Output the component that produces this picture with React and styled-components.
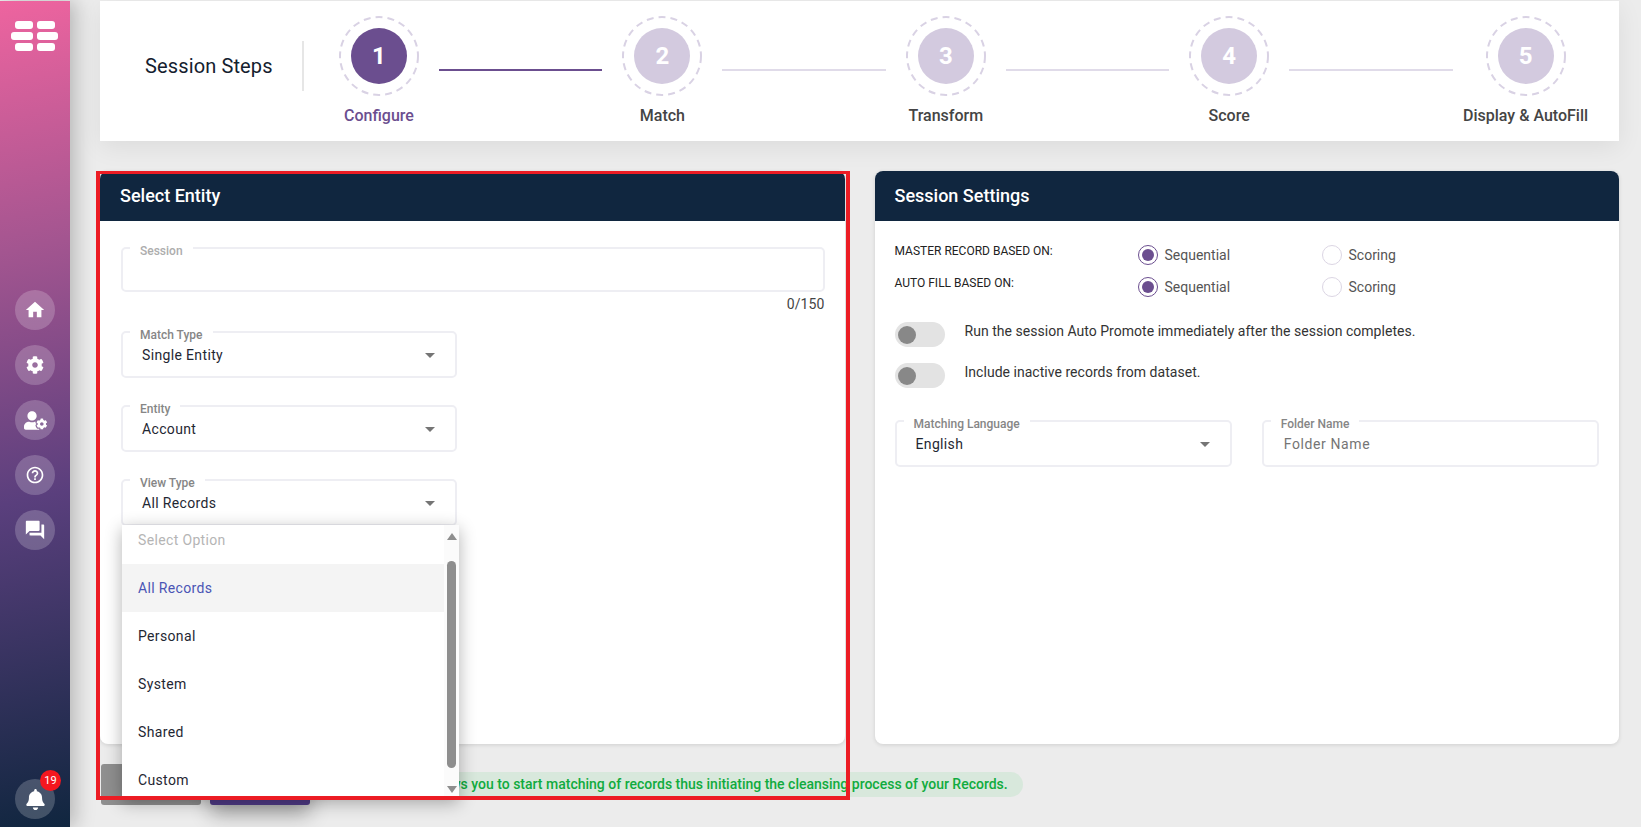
import React from 'react';
import styled, { createGlobalStyle } from 'styled-components';
import { MdHome, MdHelpOutline, MdForum } from 'react-icons/md';
import { FaCog, FaUserCog, FaBell } from 'react-icons/fa';

const Global = createGlobalStyle`
  html, body { margin: 0; padding: 0; background: #ececec; }
  * { box-sizing: border-box; }
  body { font-family: Roboto, "Liberation Sans", sans-serif; }
`;

const Page = styled.div`
  display: flex;
  width: 1641px;
  height: 827px;
  overflow: hidden;
  position: relative;
  background: #ececec;
`;

const Sidebar = styled.aside`
  width: 70px;
  flex: none;
  margin-top: 1px;
  display: flex;
  flex-direction: column;
  align-items: center;
  padding: 20px 0 8px;
  background: linear-gradient(168deg, #ee649f 0%, #a35590 30%, #5a3f7d 60%, #10263f 100%);
  box-shadow: 6px 0 18px rgba(0, 0, 0, 0.22);
  position: relative;
  z-index: 2;
`;

const Logo = styled.svg`
  width: 48px;
  height: 31px;
  flex: none;
`;

const Nav = styled.nav`
  display: flex;
  flex-direction: column;
  gap: 15px;
  margin-top: 238px;
`;

const NavButton = styled.div`
  width: 40px;
  height: 40px;
  border-radius: 50%;
  background: rgba(255, 255, 255, 0.2);
  color: #fff;
  display: flex;
  align-items: center;
  justify-content: center;
  font-size: ${p => p.$size || 20}px;
  position: relative;
`;

const BellWrap = styled.div`
  margin-top: auto;
`;

const Badge = styled.span`
  position: absolute;
  top: -9px;
  right: -6px;
  width: 21px;
  height: 21px;
  border-radius: 50%;
  background: #f4171f;
  color: #fff;
  font-size: 11px;
  display: flex;
  align-items: center;
  justify-content: center;
`;

const Main = styled.main`
  flex: 1;
  min-width: 0;
  padding: 1px 22px 0 30px;
  display: flex;
  flex-direction: column;
`;

const Stepper = styled.section`
  height: 140px;
  background: #fff;
  display: flex;
  align-items: flex-start;
  padding: 15px 0 0 45px;
  box-shadow: 0 6px 24px rgba(0, 0, 0, 0.07);
`;

const StepsTitle = styled.h2`
  margin: 35px 0 0;
  width: 127px;
  font-size: 20px;
  line-height: 30px;
  font-weight: 400;
  letter-spacing: 0.13px;
  color: #14202e;
  white-space: nowrap;
`;

const StepsDivider = styled.div`
  width: 2px;
  height: 50px;
  margin: 25px 35px 0 30px;
  background: #e6e6e6;
`;

const Step = styled.div`
  width: 80px;
  display: flex;
  flex-direction: column;
  align-items: center;
  flex: none;
`;

const Ring = styled.div`
  width: 80px;
  height: 80px;
  position: relative;
  display: flex;
  align-items: center;
  justify-content: center;
`;

const RingDash = styled.svg`
  position: absolute;
  inset: 0;
`;

const StepNumber = styled.div`
  width: 56px;
  height: 56px;
  border-radius: 50%;
  background: ${p => (p.$active ? '#6b4e8f' : '#d3cadf')};
  color: #fff;
  font-size: 24px;
  font-weight: 700;
  display: flex;
  align-items: center;
  justify-content: center;
`;

const StepLabel = styled.div`
  margin-top: 10px;
  font-size: 16px;
  line-height: 20px;
  font-weight: 500;
  white-space: nowrap;
  color: ${p => (p.$active ? '#6b4e8f' : '#444')};
`;

const Connector = styled.div`
  flex: none;
  width: 163.4px;
  height: 2px;
  margin: 53px ${p => p.$right || 20}px 0 20px;
  background: ${p => (p.$active ? '#6b4e8f' : '#e0dbe9')};
`;

const Panels = styled.div`
  display: flex;
  gap: 30px;
  margin-top: 30px;
  height: 573px;
`;

const Panel = styled.section`
  flex: 1;
  background: #fff;
  border-radius: 8px;
  box-shadow: 0 1px 4px rgba(0, 0, 0, 0.12);
  display: flex;
  flex-direction: column;
`;

const PanelHeader = styled.h3`
  margin: 0;
  height: 50px;
  flex: none;
  background: #10263f;
  border-radius: 8px 8px 0 0;
  color: #fff;
  font-size: 18px;
  font-weight: 500;
  line-height: 50px;
  padding-left: 20px;
`;

const LeftBody = styled.div`
  padding: 17px 20px 0 21px;
`;

const RightBody = styled.div`
  padding: 21px 20px 0 20px;
`;

const Field = styled.fieldset`
  margin: 0;
  width: 100%;
  height: ${p => p.$height || 56}px;
  min-width: 0;
  padding: 0 20px 8px 19px;
  border: 2px solid #eeeef3;
  border-radius: 5px;
  display: flex;
  align-items: center;
  justify-content: space-between;
  background: #fff;
`;

const Legend = styled.legend`
  margin-left: -12px;
  padding: 6px 10px 0;
  font-size: 12px;
  line-height: 14px;
  font-weight: 500;
  color: ${p => (p.$muted ? '#adadad' : '#868686')};
`;

const FieldValue = styled.span`
  font-size: 14px;
  letter-spacing: ${p => (p.$placeholder ? '0.6px' : '0.35px')};
  margin-left: ${p => (p.$placeholder ? '1px' : '0')};
  color: ${p => (p.$placeholder ? '#757575' : '#1f2733')};
`;

const Caret = styled.span`
  width: 0;
  height: 0;
  border-left: 5px solid transparent;
  border-right: 5px solid transparent;
  border-top: 5px solid #757575;
`;

const Counter = styled.div`
  text-align: right;
  font-size: 14px;
  line-height: 16px;
  margin: 4px 0 10px;
  color: #444;
  letter-spacing: 0.1px;
`;

const Stack = styled.div`
  display: flex;
  flex-direction: column;
  gap: 18px;
  width: 336px;
`;

const SelectWrap = styled.div`
  position: relative;
  width: 100%;
`;

const Dropdown = styled.div`
  position: absolute;
  left: 1px;
  top: 55px;
  width: 337px;
  height: 274px;
  background: #fff;
  box-shadow: 0 4px 16px rgba(0, 0, 0, 0.3);
  display: flex;
  overflow: hidden;
  z-index: 3;
`;

const OptionList = styled.div`
  flex: 1;
  margin-top: -9px;
`;

const Option = styled.div`
  height: 48px;
  display: flex;
  align-items: center;
  padding-left: 16px;
  font-size: 14px;
  letter-spacing: 0.35px;
  color: ${p => (p.$placeholder ? '#b5b5b5' : p.$selected ? '#4a55b5' : '#1f2733')};
  background: ${p => (p.$selected ? '#f4f4f4' : 'transparent')};
`;

const ScrollTrack = styled.div`
  width: 15px;
  flex: none;
  background: #fbfbfb;
  display: flex;
  flex-direction: column;
  align-items: center;
  padding-top: 8px;
`;

const ScrollArrow = styled.span`
  width: 0;
  height: 0;
  border-left: 5px solid transparent;
  border-right: 5px solid transparent;
  ${p => (p.$down ? 'border-top: 7px solid #8e8e8e; margin-top: 18px;' : 'border-bottom: 7px solid #8e8e8e;')}
`;

const ScrollThumb = styled.div`
  width: 9px;
  height: 207px;
  margin-top: 21px;
  border-radius: 5px;
  background: #8e8e8e;
`;

const Footer = styled.div`
  display: flex;
  align-items: flex-start;
  gap: 9px;
  margin: 20px 0 0 1px;
`;

const ActionButton = styled.div`
  width: 100px;
  height: 41px;
  border-radius: 3px;
  background: ${p => (p.$primary ? '#4f3a85' : '#8f8f8f')};
  box-shadow: ${p => (p.$primary ? '0 10px 20px rgba(0,0,0,.3)' : 'none')};
`;

const Hint = styled.div`
  height: 25px;
  margin: 8px 0 0 29px;
  padding: 0 15px;
  border-radius: 13px;
  background: #d8e8dc;
  color: #10ab3e;
  font-size: 14px;
  font-weight: 500;
  line-height: 25px;
  white-space: nowrap;
`;

const Annotation = styled.div`
  position: absolute;
  left: 96px;
  top: 171px;
  width: 754px;
  height: 629px;
  border: 4px solid #ec1c24;
  border-top-width: 3px;
  z-index: 4;
  pointer-events: none;
`;

const SettingRow = styled.div`
  display: grid;
  grid-template-columns: 243px 184px 1fr;
  height: 32px;
`;

const SettingLabel = styled.span`
  font-size: 12px;
  line-height: 18px;
  color: #222;
  white-space: nowrap;
`;

const RadioOption = styled.span`
  display: flex;
  align-items: center;
  gap: 7px;
  height: 20px;
  margin-top: 3px;
  font-size: 14px;
  color: #555;
`;

const Radio = styled.span`
  width: 20px;
  height: 20px;
  border-radius: 50%;
  border: 1px solid ${p => (p.$on ? '#6b4e8f' : '#dcd6e4')};
  display: flex;
  align-items: center;
  justify-content: center;
  &::after {
    content: '';
    width: 12px;
    height: 12px;
    border-radius: 50%;
    background: ${p => (p.$on ? '#6b4e8f' : 'transparent')};
  }
`;

const ToggleRow = styled.div`
  display: flex;
  align-items: flex-start;
  gap: 20px;
  height: 25px;
`;

const ToggleList = styled.div`
  display: flex;
  flex-direction: column;
  gap: 16px;
  margin-top: 16px;
`;

const Toggle = styled.span`
  width: 50px;
  height: 25px;
  border-radius: 13px;
  background: #e3e3e3;
  display: flex;
  align-items: center;
  padding-left: 3px;
  flex: none;
  &::after {
    content: '';
    width: 18px;
    height: 18px;
    border-radius: 50%;
    background: #888;
  }
`;

const ToggleText = styled.span`
  margin-top: 1px;
  font-size: 14px;
  line-height: 16px;
  letter-spacing: 0.03px;
  color: #333;
  white-space: nowrap;
`;

const FieldRow = styled.div`
  display: grid;
  grid-template-columns: 1fr 1fr;
  gap: 30px;
  margin-top: 23px;
`;

const steps = [
  { n: 1, label: 'Configure', active: true },
  { n: 2, label: 'Match' },
  { n: 3, label: 'Transform' },
  { n: 4, label: 'Score' },
  { n: 5, label: 'Display & AutoFill' },
];

const options = ['Personal', 'System', 'Shared', 'Custom'];

function StepItem({ n, label, active }) {
  return (
    <Step>
      <Ring>
        <RingDash width="80" height="80" viewBox="0 0 80 80">
          <circle cx="40" cy="40" r="39" fill="none" stroke="#d9d2e4" strokeWidth="2" strokeDasharray="7 5" />
        </RingDash>
        <StepNumber $active={active}>{n}</StepNumber>
      </Ring>
      <StepLabel $active={active}>{label}</StepLabel>
    </Step>
  );
}

function SelectField({ label, value, children }) {
  return (
    <SelectWrap>
      <Field>
        <Legend>{label}</Legend>
        <FieldValue>{value}</FieldValue>
        <Caret />
      </Field>
      {children}
    </SelectWrap>
  );
}

function RadioRow({ label }) {
  return (
    <SettingRow>
      <SettingLabel>{label}</SettingLabel>
      <RadioOption><Radio $on />Sequential</RadioOption>
      <RadioOption><Radio />Scoring</RadioOption>
    </SettingRow>
  );
}

export default function App() {
  return (
    <Page>
      <Global />
      <Sidebar>
        <Logo viewBox="0 0 48 31" fill="#fff">
          <rect x="4" y="0" width="18" height="8" rx="3" />
          <rect x="26" y="0" width="18" height="8" rx="3" />
          <rect x="0" y="11" width="22" height="8" rx="3" />
          <rect x="26" y="11" width="21" height="8" rx="3" />
          <rect x="4" y="22" width="18" height="8" rx="3" />
          <rect x="26" y="22" width="18" height="8" rx="3" />
        </Logo>
        <Nav>
          <NavButton $size={22}><MdHome /></NavButton>
          <NavButton $size={18}><FaCog /></NavButton>
          <NavButton $size={23}><FaUserCog /></NavButton>
          <NavButton $size={20}><MdHelpOutline /></NavButton>
          <NavButton $size={22}><MdForum /></NavButton>
        </Nav>
        <BellWrap>
          <NavButton $size={21}>
            <FaBell />
            <Badge>19</Badge>
          </NavButton>
        </BellWrap>
      </Sidebar>
      <Main>
        <Stepper>
          <StepsTitle>Session Steps</StepsTitle>
          <StepsDivider />
          <StepItem {...steps[0]} />
          <Connector $active />
          <StepItem {...steps[1]} />
          <Connector />
          <StepItem {...steps[2]} />
          <Connector />
          <StepItem {...steps[3]} />
          <Connector $right={33} />
          <StepItem {...steps[4]} />
        </Stepper>
        <Panels>
          <Panel>
            <PanelHeader>Select Entity</PanelHeader>
            <LeftBody>
              <Field $height={54}>
                <Legend $muted>Session</Legend>
              </Field>
              <Counter>0/150</Counter>
              <Stack>
                <SelectField label="Match Type" value="Single Entity" />
                <SelectField label="Entity" value="Account" />
                <SelectField label="View Type" value="All Records">
                  <Dropdown>
                    <OptionList>
                      <Option $placeholder>Select Option</Option>
                      <Option $selected>All Records</Option>
                      {options.map(o => <Option key={o}>{o}</Option>)}
                    </OptionList>
                    <ScrollTrack>
                      <ScrollArrow />
                      <ScrollThumb />
                      <ScrollArrow $down />
                    </ScrollTrack>
                  </Dropdown>
                </SelectField>
              </Stack>
            </LeftBody>
          </Panel>
          <Panel>
            <PanelHeader>Session Settings</PanelHeader>
            <RightBody>
              <RadioRow label="MASTER RECORD BASED ON:" />
              <RadioRow label="AUTO FILL BASED ON:" />
              <ToggleList>
                <ToggleRow>
                  <Toggle />
                  <ToggleText>Run the session Auto Promote immediately after the session completes.</ToggleText>
                </ToggleRow>
                <ToggleRow>
                  <Toggle />
                  <ToggleText>Include inactive records from dataset.</ToggleText>
                </ToggleRow>
              </ToggleList>
              <FieldRow>
                <SelectField label="Matching Language" value="English" />
                <SelectWrap>
                  <Field>
                    <Legend>Folder Name</Legend>
                    <FieldValue $placeholder>Folder Name</FieldValue>
                  </Field>
                </SelectWrap>
              </FieldRow>
            </RightBody>
          </Panel>
        </Panels>
        <Footer>
          <ActionButton />
          <ActionButton $primary />
          <Hint>Configure allows you to start matching of records thus initiating the cleansing process of your Records.</Hint>
        </Footer>
      </Main>
      <Annotation />
    </Page>
  );
}
